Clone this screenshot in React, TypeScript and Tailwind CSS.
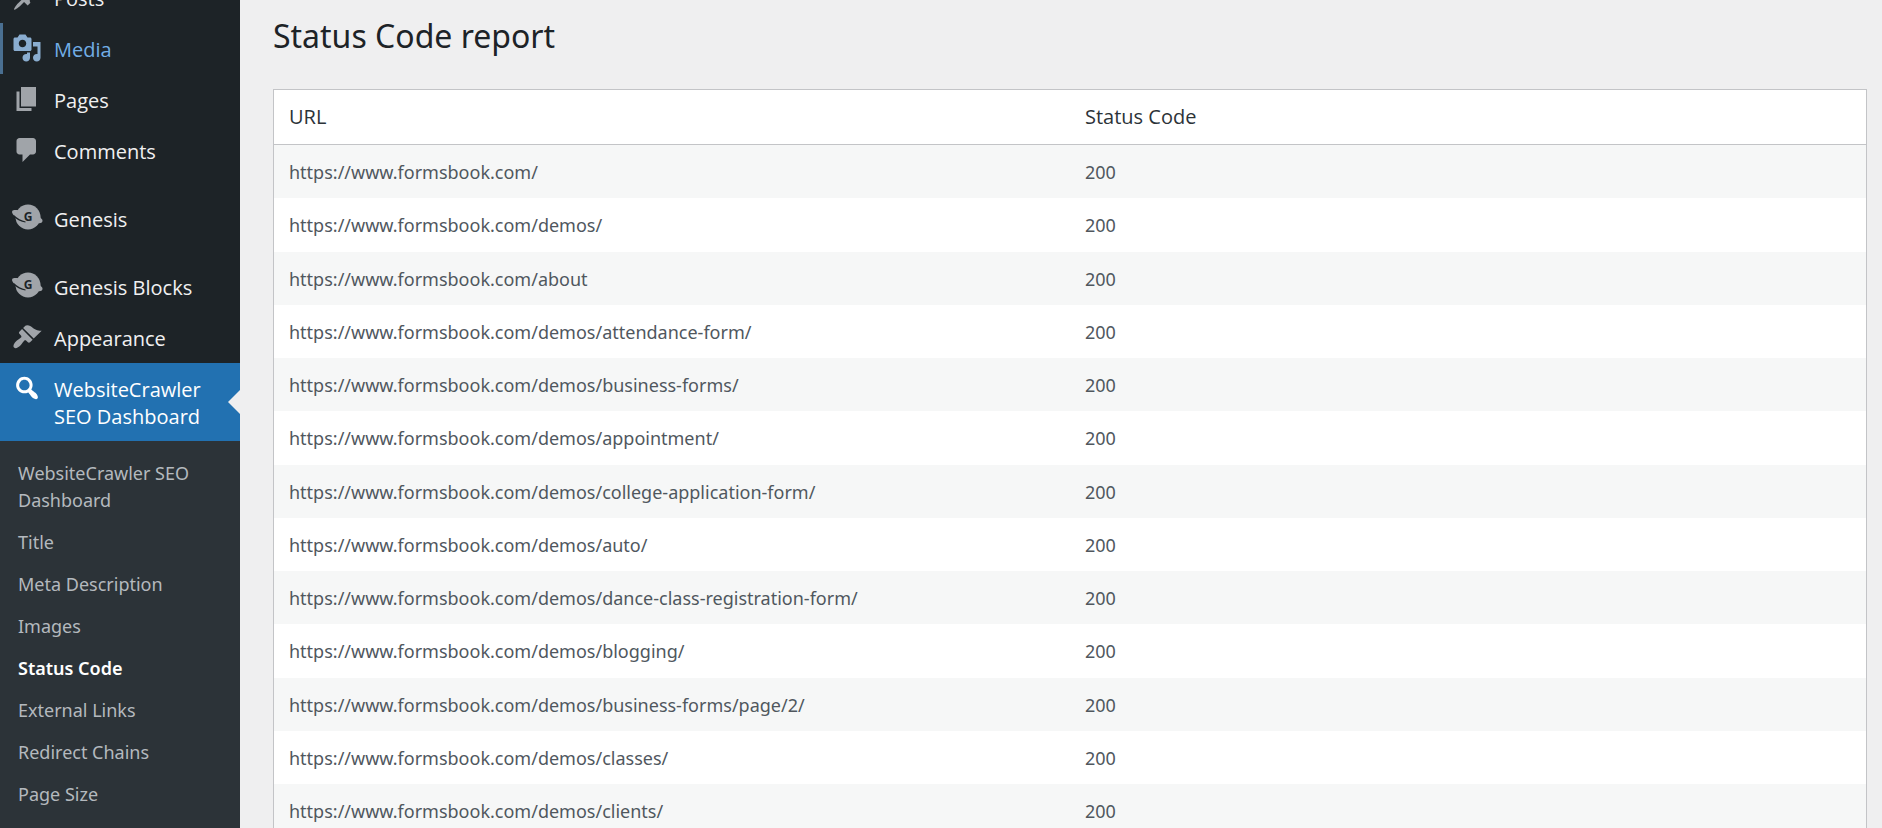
const ICONS = {
  post: "M10.44 3.02l1.82-1.82 6.36 6.35-1.83 1.82c-1.05-.68-2.48-.57-3.41.36l-.75.75c-.92.93-1.04 2.35-.35 3.41l-1.83 1.82-2.41-2.41-2.8 2.79c-.42.42-3.38 2.71-3.8 2.29s1.86-3.39 2.28-3.81l2.79-2.79L4.1 9.36l1.83-1.82c1.05.69 2.48.57 3.4-.36l.75-.75c.93-.92 1.05-2.35.36-3.41z",
  media: "M13 11V4c0-.55-.45-1-1-1h-1.67L9 1H5L3.67 3H2c-.55 0-1 .45-1 1v7c0 .55.45 1 1 1h10c.55 0 1-.45 1-1zM7 4.5c1.38 0 2.5 1.12 2.5 2.5S8.38 9.5 7 9.5 4.5 8.38 4.5 7 5.62 4.5 7 4.5zM14 6h5v10.5c0 1.38-1.12 2.5-2.5 2.5S14 17.88 14 16.5s1.12-2.5 2.5-2.5c.17 0 .34.02.5.05V9h-3V6zm-4 8.05V13h2v3.5c0 1.38-1.12 2.5-2.5 2.5S7 17.88 7 16.5 8.12 14 9.5 14c.17 0 .34.02.5.05z",
  page: "M6 15V2h10v13H6zm-1 1h8v2H3V5h2v11z",
  comments: "M5 2h9c1.1 0 2 .9 2 2v7c0 1.1-.9 2-2 2h-2l-5 5v-5H5c-1.1 0-2-.9-2-2V4c0-1.1.9-2 2-2z",
  appearance: "M14.48 11.06L7.41 3.99l1.5-1.5c.5-.56 2.3-.47 3.51.32 1.21.8 1.43 1.28 2.91 2.1 1.18.64 2.45 1.26 4.45.85zm-.71.71L6.7 4.7 4.93 6.47c-.39.39-.39 1.02 0 1.41l1.06 1.06c.39.39.39 1.03 0 1.42-.6.6-1.43 1.11-2.21 1.69-.35.26-.7.53-1.01.84C1.43 14.23.4 16.08 1.4 17.07c.99 1 2.84-.03 4.18-1.36.31-.31.58-.66.85-1.02.57-.78 1.08-1.61 1.69-2.21.39-.39 1.02-.39 1.41 0l1.06 1.06c.39.39 1.02.39 1.41 0z",
  search: "M12.14 4.18c1.87 1.87 2.11 4.75.72 6.89.12.1.22.21.36.31.2.16.47.36.81.59.34.24.56.39.66.47.42.31.73.57.94.78.32.32.6.65.84 1 .25.35.44.69.59 1.04.14.35.21.68.18 1-.02.32-.14.59-.36.81s-.49.34-.81.36c-.31.02-.65-.04-.99-.19-.35-.14-.7-.34-1.04-.59-.35-.24-.68-.52-1-.84-.21-.21-.47-.52-.77-.93-.1-.13-.25-.35-.47-.66-.22-.32-.4-.57-.56-.78-.16-.2-.29-.35-.44-.5-2.07 1.09-4.69.76-6.44-.98-2.14-2.15-2.14-5.64 0-7.78 2.15-2.15 5.63-2.15 7.78 0zm-1.41 6.36c1.36-1.37 1.36-3.58 0-4.95-1.37-1.37-3.59-1.37-4.95 0-1.37 1.37-1.37 3.58 0 4.95 1.36 1.37 3.58 1.37 4.95 0z",
};

const SUBMENU = [
  "WebsiteCrawler SEO Dashboard",
  "Title",
  "Meta Description",
  "Images",
  "Status Code",
  "External Links",
  "Redirect Chains",
  "Page Size",
];

const ROWS = [
  { url: "https://www.formsbook.com/", status: 200 },
  { url: "https://www.formsbook.com/demos/", status: 200 },
  { url: "https://www.formsbook.com/about", status: 200 },
  { url: "https://www.formsbook.com/demos/attendance-form/", status: 200 },
  { url: "https://www.formsbook.com/demos/business-forms/", status: 200 },
  { url: "https://www.formsbook.com/demos/appointment/", status: 200 },
  { url: "https://www.formsbook.com/demos/college-application-form/", status: 200 },
  { url: "https://www.formsbook.com/demos/auto/", status: 200 },
  { url: "https://www.formsbook.com/demos/dance-class-registration-form/", status: 200 },
  { url: "https://www.formsbook.com/demos/blogging/", status: 200 },
  { url: "https://www.formsbook.com/demos/business-forms/page/2/", status: 200 },
  { url: "https://www.formsbook.com/demos/classes/", status: 200 },
  { url: "https://www.formsbook.com/demos/clients/", status: 200 },
];

function Dashicon({ name }: { name: keyof typeof ICONS }) {
  return (
    <svg viewBox="0 0 20 20" className="-mt-[3px] -mb-[2px] size-[30px] shrink-0 fill-current" aria-hidden="true">
      <path d={ICONS[name]} />
    </svg>
  );
}

function GenesisIcon() {
  return (
    <svg viewBox="0 0 30 30" className="-mt-[3px] -mb-[2px] size-[30px] shrink-0 overflow-visible fill-current" aria-hidden="true">
      <circle cx="16" cy="14" r="12.5" />
      <path d="M6 7C4 7.200 1 6.600.2 8c-.8 1.800 1 4.200 4 6.800z" />
      <path d="M28 12c0 2 .4 3 1.800 4 1 1 .9 2.800 0 3.500-1.300.9-3 .6-4.800.5z" />
      <path d="M1.500 12.500c3.500 3.500 7.500 5.800 12 6.500" fill="none" stroke="#1d2327" strokeWidth="1.200" />
      <text x="16" y="18" textAnchor="middle" className="fill-[#1d2327] text-[12px] font-bold">G</text>
    </svg>
  );
}

type MenuItemProps = {
  label: string;
  icon: React.ReactNode;
  hovered?: boolean;
};

function MenuItem({ label, icon, hovered }: MenuItemProps) {
  return (
    <li>
      <a
        href="#"
        className={`flex items-start gap-3 px-3 pt-[13px] pb-[11px] ${hovered ? "text-[#72aee6] shadow-[inset_3px_0_0_#4a6f91]" : "text-[#f0f0f1]"}`}
      >
        <span className={hovered ? "flex text-[#8aadd0]" : "flex text-[#a0a4a9]"}>{icon}</span>
        <span>{label}</span>
      </a>
    </li>
  );
}

export default function App() {
  return (
    <div className="flex h-screen overflow-hidden bg-[#efeff0] font-['Noto_Sans',sans-serif] text-[18px] text-[#50575e]">
      <nav className="w-60 shrink-0 bg-[#1d2327] font-['Open_Sans',sans-serif] text-[20px] leading-[27px]" aria-label="Main menu">
        <ul className="-mt-7">
          <MenuItem label="Posts" icon={<Dashicon name="post" />} />
          <MenuItem label="Media" icon={<Dashicon name="media" />} hovered />
          <MenuItem label="Pages" icon={<Dashicon name="page" />} />
          <MenuItem label="Comments" icon={<Dashicon name="comments" />} />
          <li className="h-[17px]" />
          <MenuItem label="Genesis" icon={<GenesisIcon />} />
          <li className="h-[17px]" />
          <MenuItem label="Genesis Blocks" icon={<GenesisIcon />} />
          <MenuItem label="Appearance" icon={<Dashicon name="appearance" />} />
          <li>
            <a href="#" className="relative flex items-start gap-3 bg-[#2271b1] pt-[13px] pr-8 pb-[11px] pl-3 text-white">
              <Dashicon name="search" />
              <span>WebsiteCrawler SEO Dashboard</span>
              <span className="absolute top-1/2 right-0 -mt-3 border-y-12 border-r-12 border-y-transparent border-r-[#efeff0]" />
            </a>
            <ul className="bg-[#2c3338] pt-[11px] pb-20 font-['Noto_Sans',sans-serif] text-[18px]">
              {SUBMENU.map((label) => (
                <li key={label}>
                  <a
                    href="#"
                    className={`block px-[18px] pt-2 pb-[7px] ${label === "Status Code" ? "font-semibold text-white" : "text-[#b4b9be]"}`}
                  >
                    {label}
                  </a>
                </li>
              ))}
            </ul>
          </li>
        </ul>
      </nav>
      <main className="min-w-0 flex-1 pt-3 pr-[15px] pl-[33px]">
        <h1 className="text-[32px] leading-[48px] text-[#1d2327]">Status Code report</h1>
        <table className="mt-[29px] w-full table-fixed border-separate border-spacing-0 border border-[#c3c4c7] bg-white text-left">
          <thead>
            <tr className="font-['Open_Sans',sans-serif] text-[20px] leading-[28px] text-[#2c3338]">
              <th scope="col" className="border-b border-[#c3c4c7] px-[15px] py-[13px] font-normal">URL</th>
              <th scope="col" className="border-b border-[#c3c4c7] px-[15px] py-[13px] font-normal">Status Code</th>
            </tr>
          </thead>
          <tbody>
            {ROWS.map((row) => (
              <tr key={row.url} className="leading-relaxed odd:bg-[#f6f7f7]">
                <td className="px-[15px] pt-[13px] pb-[11px]">{row.url}</td>
                <td className="px-[15px] pt-[13px] pb-[11px]">{row.status}</td>
              </tr>
            ))}
          </tbody>
        </table>
      </main>
    </div>
  );
}
